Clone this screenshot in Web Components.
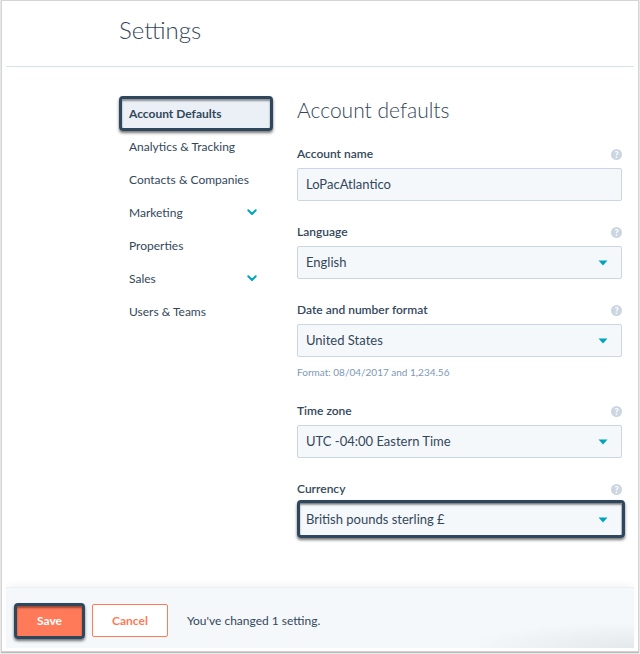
<!DOCTYPE html>
<html lang="en">
<head>
<meta charset="utf-8">
<meta name="viewport" content="width=device-width, initial-scale=1">
<title>Settings</title>
<style>
    body {
        margin: 0;
        background: #f7f7f7;
        color: #33475b;
        font: 13px/16px Lato, "Open Sans", sans-serif;
    }
</style>
</head>
<body>

<settings-page heading="Settings">
    <settings-nav slot="nav">
        <nav-item active>Account Defaults</nav-item>
        <nav-item>Analytics &amp; Tracking</nav-item>
        <nav-item>Contacts &amp; Companies</nav-item>
        <nav-item expandable>Marketing</nav-item>
        <nav-item>Properties</nav-item>
        <nav-item expandable>Sales</nav-item>
        <nav-item>Users &amp; Teams</nav-item>
    </settings-nav>

    <settings-section heading="Account defaults">
        <form-field label="Account name" value="LoPacAtlantico"></form-field>
        <form-field type="select" label="Language" value="English"></form-field>
        <form-field type="select" label="Date and number format" value="United States" hint="Format: 08/04/2017 and 1,234.56"></form-field>
        <form-field type="select" label="Time zone" value="UTC -04:00 Eastern Time"></form-field>
        <form-field type="select" label="Currency" value="British pounds sterling £" marked></form-field>
    </settings-section>

    <save-bar slot="footer">
        <ui-button variant="primary" slot="actions" marked>Save</ui-button>
        <ui-button slot="actions">Cancel</ui-button>
        You've changed 1 setting.
    </save-bar>
</settings-page>

<script>
// thick rounded outline laid over a marked control
const ring = `
    content: "";
    position: absolute;
    border: 3px solid #2e475d;
    border-radius: 4px;
    box-shadow: 0 2px 3px rgba(0,0,0,.55), inset 0 2px 2px rgba(0,0,0,.4);
    pointer-events: none;
`;

class SettingsPage extends HTMLElement {
    constructor() {
        super();
        this.attachShadow({ mode: 'open' });
    }

    connectedCallback() {
        this.shadowRoot.innerHTML = `
            <style>
                :host {
                    display: flex;
                    box-sizing: border-box;
                    min-height: 100vh;
                    padding: 1px 2px 3px;
                }
                .frame {
                    flex: 1;
                    display: flex;
                    flex-direction: column;
                    padding: 0 4px 3px;
                    background: #fff;
                    box-shadow: 0 0 1px 1px #d4d4d4, 0 1px 1px 1px #b4b4b4;
                }
                header {
                    padding: 13px 0 20px 113px;
                    border-bottom: 1px solid #d6e0ea;
                }
                h1 {
                    margin: 0;
                    font-size: 24px;
                    line-height: 32px;
                    font-weight: 300;
                }
                .columns {
                    flex: 1;
                    display: grid;
                    grid-template-columns: 154px minmax(0, 1fr);
                    gap: 24px;
                    padding: 29px 12px 48px 113px;
                    align-items: start;
                }
            </style>
            <div class="frame">
                <header><h1></h1></header>
                <div class="columns">
                    <slot name="nav"></slot>
                    <main><slot></slot></main>
                </div>
                <slot name="footer"></slot>
            </div>
        `;
        this.shadowRoot.querySelector('h1').textContent = this.getAttribute('heading');
    }
}

class SettingsNav extends HTMLElement {
    constructor() {
        super();
        this.attachShadow({ mode: 'open' }).innerHTML = `
            <style>
                :host { display: block; }
                nav { display: flex; flex-direction: column; }
            </style>
            <nav aria-label="Settings"><slot></slot></nav>
        `;
    }
}

class NavItem extends HTMLElement {
    constructor() {
        super();
        this.attachShadow({ mode: 'open' });
    }

    connectedCallback() {
        const chevron = `
            <svg width="10" height="7" viewBox="0 0 10 7" aria-hidden="true">
                <path d="M1.3 1.3 5 5 8.7 1.3" fill="none" stroke="#00a4bd" stroke-width="2" stroke-linecap="round" stroke-linejoin="round"/>
            </svg>`;

        this.shadowRoot.innerHTML = `
            <style>
                :host { display: block; }
                a {
                    position: relative;
                    display: flex;
                    align-items: center;
                    justify-content: space-between;
                    height: 33px;
                    padding: 0 16px 0 10px;
                    color: inherit;
                    font-size: 12px;
                    text-decoration: none;
                }
                :host([active]) { margin-bottom: -1px; }
                :host([active]) a {
                    height: 35px;
                    border-radius: 4px;
                    background: #eaf0f6;
                    font-weight: 700;
                }
                :host([active]) a::after { ${ring} inset: 0; }
            </style>
            <a href="#"><span><slot></slot></span>${this.hasAttribute('expandable') ? chevron : ''}</a>
        `;
    }
}

class SettingsSection extends HTMLElement {
    constructor() {
        super();
        this.attachShadow({ mode: 'open' });
    }

    connectedCallback() {
        this.shadowRoot.innerHTML = `
            <style>
                :host { display: block; }
                h2 {
                    margin: 0 0 22px;
                    font-size: 21px;
                    line-height: 28px;
                    font-weight: 300;
                }
                .fields {
                    display: flex;
                    flex-direction: column;
                    gap: 23px;
                }
            </style>
            <h2></h2>
            <div class="fields"><slot></slot></div>
        `;
        this.shadowRoot.querySelector('h2').textContent = this.getAttribute('heading');
    }
}

class FormField extends HTMLElement {
    constructor() {
        super();
        this.attachShadow({ mode: 'open' });
    }

    connectedCallback() {
        const isSelect = this.getAttribute('type') === 'select';
        const value = this.getAttribute('value') || '';
        const hint = this.getAttribute('hint');

        const control = isSelect
            ? `<select id="control"><option>${value}</option></select>
               <svg width="10" height="6" viewBox="0 0 10 6" aria-hidden="true"><path d="M.5 .5h9L5 5.5z" fill="#00a4bd"/></svg>`
            : `<input id="control" type="text" value="${value}">`;

        this.shadowRoot.innerHTML = `
            <style>
                :host { display: block; }
                .top {
                    display: flex;
                    align-items: center;
                    justify-content: space-between;
                    margin-bottom: 6px;
                }
                label {
                    font-size: 12px;
                    font-weight: 600;
                }
                .help {
                    width: 11px;
                    height: 11px;
                    padding: 0;
                    border: 0;
                    border-radius: 50%;
                    background: #cbd6e2;
                    color: #fff;
                    font: 900 9px/11px Lato, sans-serif;
                }
                .control {
                    position: relative;
                    display: grid;
                    align-items: center;
                }
                input, select {
                    grid-area: 1 / 1;
                    appearance: none;
                    box-sizing: border-box;
                    width: 100%;
                    height: 33px;
                    margin: 0;
                    padding: 0 8px 1px;
                    border: 1px solid #cbd6e2;
                    border-radius: 2px;
                    background: #f5f8fa;
                    color: inherit;
                    font: inherit;
                }
                svg {
                    grid-area: 1 / 1;
                    justify-self: end;
                    margin-right: 14px;
                    pointer-events: none;
                }
                :host([marked]) .control::after { ${ring} inset: -3px -3px -2px 0; }
                p {
                    margin: 7px 0 0;
                    color: #7c98b6;
                    font-size: 10px;
                }
            </style>
            <div class="top">
                <label for="control">${this.getAttribute('label')}</label>
                <button class="help" type="button">?</button>
            </div>
            <div class="control">${control}</div>
            ${hint ? `<p>${hint}</p>` : ''}
        `;
    }
}

class UiButton extends HTMLElement {
    constructor() {
        super();
        this.attachShadow({ mode: 'open' }).innerHTML = `
            <style>
                :host { display: block; position: relative; }
                button {
                    display: block;
                    min-width: 69px;
                    height: 33px;
                    padding: 0 19px;
                    border: 1px solid #ff7a59;
                    border-radius: 2px;
                    background: #fff;
                    color: #ff7a59;
                    font: inherit;
                    font-size: 12px;
                    font-weight: 700;
                }
                :host([variant="primary"]) button {
                    background: #ff7a59;
                    color: #fff;
                }
                :host([marked])::after { ${ring} inset: -1px -1px -2px; }
            </style>
            <button type="button"><slot></slot></button>
        `;
    }
}

class SaveBar extends HTMLElement {
    constructor() {
        super();
        this.attachShadow({ mode: 'open' }).innerHTML = `
            <style>
                :host {
                    display: flex;
                    align-items: center;
                    gap: 19px;
                    box-sizing: border-box;
                    height: 61px;
                    padding: 5px 9px 0;
                    border-top: 1px solid #ebeff3;
                    background:
                        radial-gradient(ellipse 170px 26px at 100% 100%, #e3e8ec, transparent) no-repeat,
                        #f5f8fa;
                    box-shadow: 0 -4px 8px -2px rgba(0,0,0,.05);
                    font-size: 12px;
                }
                .actions { display: flex; gap: 8px; }
            </style>
            <div class="actions"><slot name="actions"></slot></div>
            <span><slot></slot></span>
        `;
    }
}

customElements.define('settings-page', SettingsPage);
customElements.define('settings-nav', SettingsNav);
customElements.define('nav-item', NavItem);
customElements.define('settings-section', SettingsSection);
customElements.define('form-field', FormField);
customElements.define('ui-button', UiButton);
customElements.define('save-bar', SaveBar);
</script>
</body>
</html>
